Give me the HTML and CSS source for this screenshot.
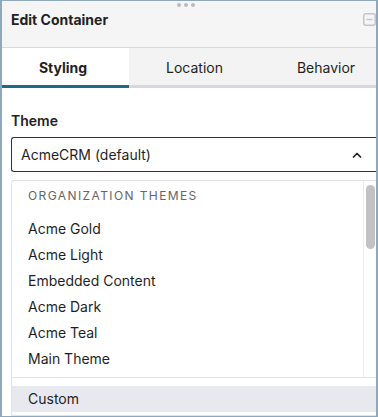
FILE: index.html
```html
<!DOCTYPE html>
<html lang="en">
<head>
<meta charset="utf-8">
<title>Edit Container</title>
<link rel="stylesheet" href="styles.css">
</head>
<body>
<div class="panel">
  <div class="grip"><span></span><span></span><span></span></div>
  <header class="head">
    <h1 class="title">Edit Container</h1>
    <svg class="collapse" width="13" height="13" viewBox="0 0 13 13" aria-hidden="true">
      <rect x="0.75" y="0.75" width="11.5" height="11.5" rx="2" fill="none" stroke="#c3c5cb" stroke-width="1.5"/>
      <line x1="3.5" y1="6.5" x2="9.5" y2="6.5" stroke="#c3c5cb" stroke-width="1.5"/>
    </svg>
  </header>
  <nav class="tabs">
    <div class="tab tab-active">Styling</div>
    <div class="tab tab-mid">Location</div>
    <div class="tab tab-last">Behavior</div>
  </nav>
  <section class="body">
    <div class="label">Theme</div>
    <div class="select">
      <span class="select-value">AcmeCRM (default)</span>
      <svg class="chev" width="10" height="6" viewBox="0 0 10 6" aria-hidden="true">
        <polyline points="1.5,5 5,1.5 8.5,5" fill="none" stroke="#1f1f1f" stroke-width="1.7" stroke-linecap="round" stroke-linejoin="round"/>
      </svg>
    </div>
    <div class="menu">
      <div class="menu-scroll">
        <div class="list">
          <div class="group">ORGANIZATION THEMES</div>
          <div class="opt">Acme Gold</div>
          <div class="opt">Acme Light</div>
          <div class="opt">Embedded Content</div>
          <div class="opt">Acme Dark</div>
          <div class="opt">Acme Teal</div>
          <div class="opt">Main Theme</div>
        </div>
        <div class="scrollbar"><div class="thumb"></div></div>
      </div>
      <div class="menu-foot">
        <div class="opt opt-hover">Custom</div>
      </div>
    </div>
  </section>
</div>
</body>
</html>
```

FILE: styles.css
```css
* { box-sizing: border-box; }
html, body { margin: 0; padding: 0; }
body {
  font-family: Inter, "Noto Sans", "Liberation Sans", sans-serif;
  color: #1f1f1f;
  background: #fff;
}
.panel {
  position: relative;
  width: 378px;
  height: 417px;
  border: 1px solid #8ea8bc;
  border-left-width: 2px;
  border-right-width: 2px;
  overflow: hidden;
  display: flex;
  flex-direction: column;
  background: #fff;
}
.grip {
  position: absolute;
  top: 2px;
  left: 175px;
  display: flex;
  gap: 3px;
}
.grip span {
  width: 4px;
  height: 4px;
  border-radius: 50%;
  background: #b8bbc3;
}
.head {
  height: 47px;
  background: #f5f5f5;
  border-bottom: 1px solid #d6d9e0;
  display: flex;
  align-items: flex-start;
  justify-content: space-between;
  padding: 9px 0 0 9px;
  flex: none;
}
.title {
  margin: 0;
  font-size: 14px;
  line-height: 20px;
  font-weight: 700;
  color: #222;
}
.collapse { margin-top: 3px; display: block; }
.tabs {
  display: grid;
  grid-template-columns: 127px 131px 1fr;
  height: 40px;
  flex: none;
}
.tab {
  display: flex;
  align-items: center;
  justify-content: center;
  font-size: 14px;
  background: #f3f3f3;
  border-bottom: 3px solid #d6d9e0;
  padding-top: 1px;
}
.tab-active {
  background: #fff;
  font-weight: 700;
  border-bottom-color: #1a6e80;
  padding-right: 5px;
}
.tab-last { padding-left: 16px; }
.body {
  flex: 1;
  padding: 23px 0 0 9px;
  display: flex;
  flex-direction: column;
  min-height: 0;
}
.label {
  font-size: 14px;
  line-height: 20px;
  font-weight: 600;
  color: #222;
}
.select {
  margin-top: 6px;
  height: 35px;
  border: 1px solid #333;
  border-right: none;
  border-radius: 3px 0 0 3px;
  display: flex;
  align-items: center;
  justify-content: space-between;
  padding: 0 14px 0 9px;
  flex: none;
}
.select-value { font-size: 14px; }
.chev { display: block; }
.menu {
  margin-top: 8px;
  border: 1px solid #e2e3e6;
  border-right: none;
  border-radius: 3px 0 0 0;
  flex: 1;
  display: flex;
  flex-direction: column;
  min-height: 0;
}
.menu-scroll {
  display: flex;
  height: 196px;
  flex: none;
}
.list {
  flex: 1;
  padding-bottom: 5px;
}
.group {
  padding: 5px 0 10px 16px;
  font-size: 12px;
  line-height: 20px;
  letter-spacing: 1.4px;
  color: #666;
}
.opt {
  height: 26px;
  line-height: 26px;
  padding-left: 16px;
  font-size: 14px;
  color: #1f1f1f;
}
.scrollbar {
  width: 13px;
  border-left: 1px solid #ececec;
  padding: 4px 1px 0 2px;
}
.thumb {
  height: 64px;
  border-radius: 5px;
  background: #c2c2c2;
}
.menu-foot {
  border-top: 1px solid #e2e3e6;
  padding-top: 8px;
  flex: none;
}
.opt-hover { background: #e8e9ee; }
```
